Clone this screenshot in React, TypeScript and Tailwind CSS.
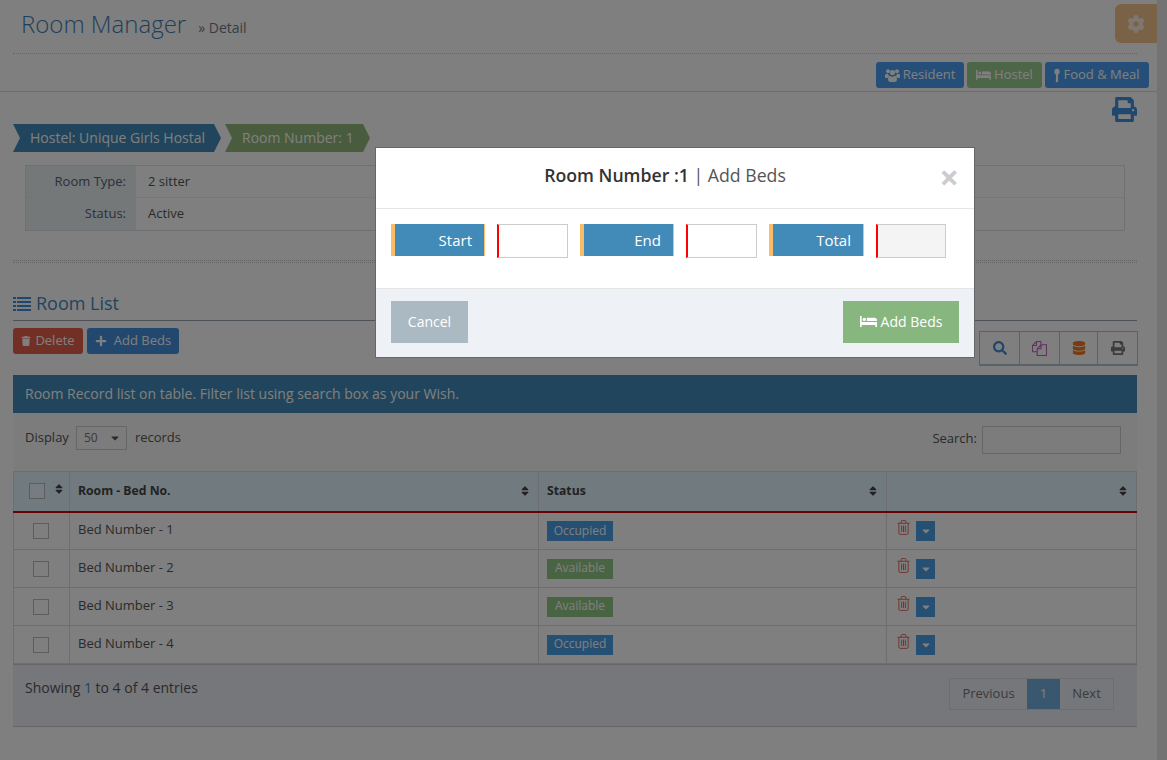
import type { ReactNode } from 'react';
import { FaCaretDown, FaCog, FaDatabase, FaPlus, FaPrint, FaSearch, FaSort, FaTrash } from 'react-icons/fa';

function BedIcon({ className }: { className?: string }) {
  return (
    <svg viewBox="0 0 20 13" className={className} fill="currentColor">
      <path d="M0 0h2v7h18v6h-2v-2.500H2V13H0z" />
      <circle cx="5" cy="4" r="2" />
      <path d="M8 2h9a3 3 0 0 1 3 3v1H8z" />
    </svg>
  );
}

function SpoonIcon({ className }: { className?: string }) {
  return (
    <svg viewBox="0 0 8 18" className={className} fill="currentColor">
      <ellipse cx="4" cy="4" rx="3.500" ry="4" />
      <path d="M2.800 7h2.400l.4 10a1 1 0 0 1-1 1h-1.200a1 1 0 0 1-1-1z" />
    </svg>
  );
}

function UsersIcon({ className }: { className?: string }) {
  return (
    <svg viewBox="0 0 15 13" className={className} fill="currentColor">
      <circle cx="3" cy="2.300" r="2" />
      <circle cx="12" cy="2.300" r="2" />
      <circle cx="7.500" cy="3.500" r="2.600" />
      <path d="M0 5.500c.8-.6 1.700-.8 2.900-.8.200 1 .7 1.800 1.400 2.300C3.400 7.500 2.900 8.300 2.700 9H.8C.3 9 0 8.700 0 8.200zM15 5.500c-.8-.6-1.700-.8-2.900-.8-.2 1-.7 1.800-1.400 2.300.9.500 1.400 1.300 1.600 2h1.900c.5 0 .8-.3.800-.8z" />
      <path d="M4.800 6.700c.7.600 1.700 1 2.700 1s2-.4 2.700-1c1 .3 1.800 1.300 1.800 3.300 0 1.800-1 3-2.200 3H5.200C4 13 3 11.800 3 10c0-2 .8-3 1.800-3.300z" />
    </svg>
  );
}

function ListIcon({ className }: { className?: string }) {
  return (
    <svg viewBox="0 0 18 14" className={className} fill="currentColor">
      <path d="M0 0h3v2H0zM4 0h14v2H4zM0 4h3v2H0zM4 4h14v2H4zM0 8h3v2H0zM4 8h14v2H4zM0 12h3v2H0zM4 12h14v2H4z" />
    </svg>
  );
}

function TrashOutline({ className }: { className?: string }) {
  return (
    <svg viewBox="0 0 14 16" className={className} fill="none" stroke="currentColor" strokeWidth="1">
      <path d="M0.500 3.500h13M4.500 3.500V1.500a1 1 0 0 1 1-1h3a1 1 0 0 1 1 1v2M2 3.500v10.500a1.500 1.500 0 0 0 1.500 1.500h7a1.500 1.500 0 0 0 1.500-1.500V3.500M5 6v7M7 6v7M9 6v7" />
    </svg>
  );
}

function FilesIcon({ className }: { className?: string }) {
  return (
    <svg viewBox="0 0 16 16" className={className} fill="none" stroke="currentColor" strokeWidth="1.100">
      <path d="M5.500 11.500H.6V4.800L4.800.6h4.700v3.500M4.800.6v4.200H.6" />
      <path d="M5.500 15.400V8.300L9.700 4.100h5.700v11.300zM9.700 4.100v4.200H5.500" />
    </svg>
  );
}

function NavButton({ className, icon, label }: { className: string; icon: ReactNode; label: string }) {
  return (
    <button className={`flex h-[26px] items-center justify-center gap-[3px] rounded-[3px] text-[13px] text-white ${className}`}>
      {icon}
      {label}
    </button>
  );
}

function SortIcon() {
  return <FaSort className="text-[12px] text-[#444]" />;
}

function Field({ label, disabled, className }: { label: string; disabled?: boolean; className?: string }) {
  return (
    <div className={`flex items-start gap-3 ${className ?? ''}`}>
      <span
        className={`flex h-[32px] items-center justify-end border-l-4 border-r border-[#f9bd6a] bg-[#428bb8] pr-3 text-[15px] font-medium text-white ${
          disabled ? 'w-[95px]' : 'w-[94px]'
        }`}
      >
        {label}
      </span>
      <input
        readOnly
        className={`h-[34px] border border-l-2 border-[#ccc] border-l-[#f00] ${disabled ? 'w-[70px] bg-[#f4f4f4]' : 'w-[71px] bg-white'}`}
      />
    </div>
  );
}

const rows = [
  { name: 'Bed Number - 1', status: 'Occupied' },
  { name: 'Bed Number - 2', status: 'Available' },
  { name: 'Bed Number - 3', status: 'Available' },
  { name: 'Bed Number - 4', status: 'Occupied' },
];

export default function App() {
  return (
    <div className="relative flex h-[760px] w-[1167px] overflow-hidden bg-white font-['Open_Sans',sans-serif] text-[#555]">
      <main className="w-[1157px] shrink-0">
        {/* Page title */}
        <div className="flex h-[54px] items-start justify-between pl-[21px]">
          <div className="flex items-baseline gap-3 pt-[6px]">
            <h1 className="text-[24px] font-light text-[#3f80b4]">Room Manager</h1>
            <span className="text-[14px] text-[#6f7a85]">» Detail</span>
          </div>
          <button className="mt-1 flex h-[39px] w-[42px] items-center justify-center rounded-l-[6px] bg-[#f5c48f]">
            <FaCog className="text-[18px] text-white/70" />
          </button>
        </div>
        <div className="mx-[13px] -mt-px w-[1124px] border-b border-dotted border-[#ccc]" />

        {/* Section buttons */}
        <div className="flex h-[38px] items-start justify-end gap-[3px] border-b border-[#ddd] pt-2 pr-2">
          <NavButton className="w-[88px] bg-[#4a9ff0]" icon={<UsersIcon className="w-[15px]" />} label="Resident" />
          <NavButton className="w-[75px] bg-[#9ccc90]" icon={<BedIcon className="w-[15px]" />} label="Hostel" />
          <NavButton className="w-[104px] bg-[#4a9ff0]" icon={<SpoonIcon className="h-[15px] w-[6px]" />} label="Food & Meal" />
        </div>

        <div className="flex h-[32px] items-end justify-end pr-5 pb-[2px]">
          <FaPrint className="text-[25px] text-[#3f8ee0]" />
        </div>

        {/* Breadcrumb */}
        <div className="ml-[13px] flex gap-1 text-[14px] text-white">
          <span className="flex h-[28px] w-[208px] items-center pb-[2px] pl-[17px] [clip-path:polygon(0_0,calc(100%-7px)_0,100%_50%,calc(100%-7px)_100%,0_100%,7px_50%)] bg-[#428bb8]">
            Hostel: Unique Girls Hostal
          </span>
          <span className="flex h-[28px] w-[145px] items-center pb-[2px] pl-[17px] [clip-path:polygon(0_0,calc(100%-7px)_0,100%_50%,calc(100%-7px)_100%,0_100%,7px_50%)] bg-[#93b87a]">
            Room Number: 1
          </span>
        </div>

        {/* Room info */}
        <div className="mx-[25px] mt-[13px] w-[1100px] border border-[#dbe3ea] text-[13px]">
          <div className="flex h-[32px] border-b border-dotted border-[#ddd]">
            <span className="flex w-[110px] items-center justify-end bg-[#eaf1f3] pr-[10px] text-[#54607a]">Room Type:</span>
            <span className="flex items-center pl-3">2 sitter</span>
          </div>
          <div className="flex h-[32px]">
            <span className="flex w-[110px] items-center justify-end bg-[#eaf1f3] pr-[10px] text-[#54607a]">Status:</span>
            <span className="flex items-center pl-3">Active</span>
          </div>
        </div>

        <div className="mx-[13px] mt-[29px] h-[3px] w-[1124px] border-y border-dotted border-[#ccc]" />

        {/* Room list heading */}
        <div className="mx-[13px] mt-[29px] flex h-[29px] w-[1124px] items-center gap-[5px] border-b border-[#9aa5b0] pb-[5px] text-[18px] text-[#3f8ac0]">
          <ListIcon className="w-[18px] text-[#3f8ee0]" />
          Room List
        </div>

        <div className="mx-[13px] flex w-[1125px] items-start justify-between">
          <div className="mt-[7px] flex gap-1 text-[13px] text-white">
            <button className="flex h-[26px] w-[70px] items-center justify-center gap-1 rounded-[3px] bg-[#e35f4c]">
              <FaTrash className="text-[10px]" />
              Delete
            </button>
            <button className="flex h-[26px] w-[92px] items-center justify-center gap-[7px] rounded-[3px] bg-[#4590e0]">
              <FaPlus className="text-[12px]" />
              Add Beds
            </button>
          </div>
          <div className="mt-[10px] flex h-[35px] border border-b-2 border-[#b0c4d4]">
            <span className="flex w-[40px] items-center justify-center border-r border-[#b0c4d4] text-[#3f8ee0]">
              <FaSearch className="text-[14px]" />
            </span>
            <span className="flex w-[40px] items-center justify-center border-r border-[#b0c4d4] text-[#c060c0]">
              <FilesIcon className="w-[15px]" />
            </span>
            <span className="flex w-[38px] items-center justify-center border-r border-[#b0c4d4] text-[#f07820]">
              <FaDatabase className="text-[14px]" />
            </span>
            <span className="flex w-[39px] items-center justify-center text-[#777]">
              <FaPrint className="text-[14px]" />
            </span>
          </div>
        </div>

        {/* Records panel */}
        <section className="mx-[13px] mt-[9px] w-[1124px]">
          <div className="flex h-[38px] items-center bg-[#428bb8] pb-px pl-3 text-[14px] text-white">
            Room Record list on table. Filter list using search box as your Wish.
          </div>

          <div className="flex h-[58px] items-start justify-between bg-[#f8f8f8] pt-[13px] pr-4 pl-3 text-[13px]">
            <div className="flex items-center">
              <span>Display</span>
              <span className="ml-[7px] flex h-[24px] w-[51px] items-center justify-between border border-[#ccc] pr-[5px] pl-[7px] text-[12px] text-[#777]">
                50
                <FaCaretDown className="text-[12px] text-[#555]" />
              </span>
              <span className="ml-2">records</span>
            </div>
            <div className="flex items-center gap-[5px]">
              <span className="pb-[2px]">Search:</span>
              <input readOnly className="h-[28px] w-[139px] border border-[#ccc] bg-white/0" />
            </div>
          </div>

          <table className="w-[1124px] table-fixed border-collapse text-[13px]">
            <colgroup>
              <col className="w-[56px]" />
              <col className="w-[469px]" />
              <col className="w-[348px]" />
              <col />
            </colgroup>
            <thead>
              <tr className="h-[40px] border-b-2 border-b-[#d40000] bg-[#e0f4ff] text-left text-[12.2px] font-semibold">
                <th className="border border-b-0 border-[#ddd] pl-[15px]">
                  <div className="flex items-start gap-2">
                    <span className="h-4 w-4 border border-[#bbb] bg-white/40" />
                    <SortIcon />
                  </div>
                </th>
                <th className="border border-b-0 border-[#ddd] pr-[7px] pb-px pl-2">
                  <div className="flex items-center justify-between text-[#444]">
                    Room - Bed No.
                    <SortIcon />
                  </div>
                </th>
                <th className="border border-b-0 border-[#ddd] pr-[7px] pb-px pl-2">
                  <div className="flex items-center justify-between text-[#444]">
                    Status
                    <SortIcon />
                  </div>
                </th>
                <th className="border border-b-0 border-[#ddd] pr-[7px] pb-px pl-2">
                  <div className="flex items-center justify-end">
                    <SortIcon />
                  </div>
                </th>
              </tr>
            </thead>
            <tbody>
              {rows.map((row) => (
                <tr key={row.name} className="h-[38px]">
                  <td className="border border-[#ddd] pl-[19px]">
                    <span className="block h-4 w-4 border border-[#bbb]" />
                  </td>
                  <td className="border border-[#ddd] px-2 pb-[2px]">{row.name}</td>
                  <td className="border border-[#ddd] px-2">
                    <span
                      className={`inline-flex h-5 w-[66px] items-center justify-center pb-px text-[12px] text-white ${
                        row.status === 'Occupied' ? 'bg-[#4a9fe6]' : 'w-[64px] bg-[#93c887]'
                      }`}
                    >
                      {row.status}
                    </span>
                  </td>
                  <td className="border border-[#ddd] pl-[10px]">
                    <div className="flex items-start gap-[6px]">
                      <TrashOutline className="w-[13px] text-[#e35f4c]" />
                      <span className="mt-px flex h-5 w-[19px] items-center justify-center bg-[#4a9fe6] text-white">
                        <FaCaretDown className="text-[12px]" />
                      </span>
                    </div>
                  </td>
                </tr>
              ))}
            </tbody>
          </table>

          <div className="flex h-[63px] items-start justify-between border-y border-y-[#ccc] bg-[#eceef4] pt-[13px] pr-[23px] pl-3 text-[14px]">
            <span className="-mt-px text-[#555]">
              Showing <span className="text-[#3f8ac0]">1</span> to 4 of 4 entries
            </span>
            <div className="flex h-[32px] border border-[#ddd] text-[13px] text-[#777]">
              <span className="flex w-[77px] items-center justify-center">Previous</span>
              <span className="flex w-[33px] items-center justify-center bg-[#72b0e0] text-white">1</span>
              <span className="flex w-[53px] items-center justify-center">Next</span>
            </div>
          </div>
        </section>
      </main>

      <div className="w-[10px] bg-[#e6e6e6]" />

      {/* Modal backdrop */}
      <div className="absolute inset-0 bg-black/50" />

      <div className="absolute top-[147px] left-[375px] h-[211px] w-[600px] border border-[#666] bg-white">
        <header className="relative flex h-[61px] items-center justify-center border-b border-[#e5e5e5] pr-5 pb-[5px] text-[17.7px] text-[#555]">
          <span>
            <span className="font-semibold text-[#333]">Room Number :1</span> | Add Beds
          </span>
          <span className="absolute top-[13px] right-[15px] text-[34px] leading-[32px] font-bold text-[#ccc]">×</span>
        </header>
        <div className="flex h-[79px] pt-[15px] pl-[15px]">
          <Field label="Start" className="mr-3" />
          <Field label="End" className="mr-3" />
          <Field label="Total" disabled />
        </div>
        <footer className="flex h-[69px] items-start justify-between border-t border-[#e5e5e5] bg-[#eef1f6] px-[15px] pt-3">
          <button className="h-[42px] w-[77px] bg-[#abb9c3] pb-px text-[14px] text-white">Cancel</button>
          <button className="flex h-[42px] w-[116px] items-center justify-center gap-1 bg-[#87b67f] pb-px text-[14px] text-white">
            <BedIcon className="w-[17px]" />
            Add Beds
          </button>
        </footer>
      </div>
    </div>
  );
}
